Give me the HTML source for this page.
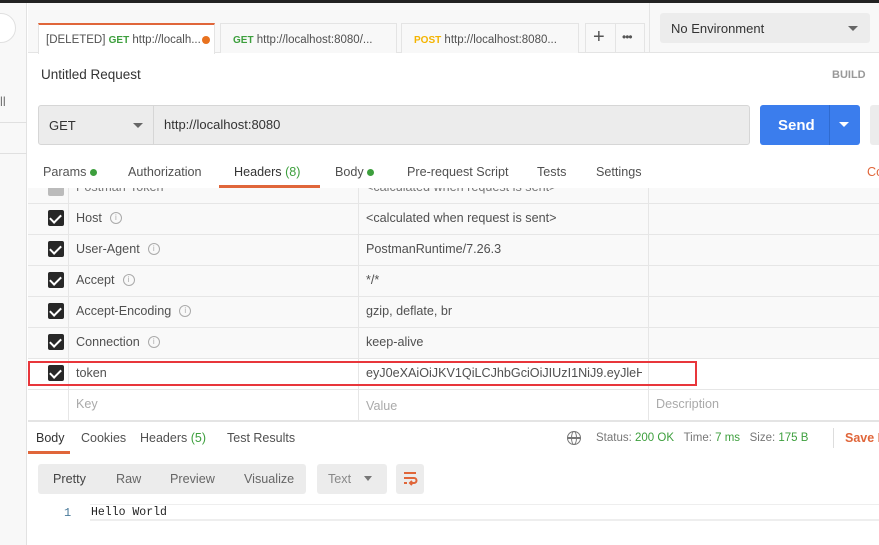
<!DOCTYPE html>
<html><head><meta charset="utf-8"><style>
*{box-sizing:border-box;margin:0;padding:0}
body{width:879px;height:545px;overflow:hidden;background:#fff;font-family:"Liberation Sans",sans-serif;font-size:12.6px;color:#505050;position:relative}
.a{position:absolute}
.t{white-space:nowrap}
.cb{position:absolute;left:48px;width:16px;height:16px;background:#282828;border-radius:2px}
.cb:after{content:"";position:absolute;left:4px;top:2px;width:5px;height:9px;border:solid #fff;border-width:0 2px 2px 0;transform:rotate(45deg)}
.info{display:inline-block;width:12px;height:12px;border:1px solid #aaa;border-radius:50%;font-size:8px;color:#aaa;text-align:center;line-height:10px;margin-left:8px;vertical-align:top;margin-top:1px}
.g{color:#3d9f3d}
</style></head><body>
<div class="a" style="left:0;top:0;width:879px;height:3px;background:#222"></div>
<div class="a" style="left:0;top:3px;width:27px;height:542px;background:#f8f8f8;border-right:1px solid #e2e2e2"></div>
<div class="a" style="left:-20px;top:13px;width:36px;height:30px;border-radius:15px;background:#fff;border:1px solid #e0e0e0"></div>
<div class="a t" style="left:0;top:94px;font-size:13px;color:#777">ll</div>
<div class="a" style="left:0;top:122px;width:27px;height:1px;background:#e0e0e0"></div>
<div class="a" style="left:0;top:153px;width:27px;height:1px;background:#e0e0e0"></div>
<div class="a" style="left:28px;top:3px;width:851px;height:50px;background:#f8f8f8;border-bottom:1px solid #e4e4e4"></div>
<div class="a" style="left:38px;top:23px;width:177px;height:31px;background:#fff;border-top:2px solid #e0663a;border-left:1px solid #e4e4e4;border-right:1px solid #e4e4e4"></div>
<div class="a t" style="left:46px;top:34px;font-size:11.5px;color:#505050">[DELETED] <b class="g" style="font-size:10px">GET</b> http://localh...</div>
<div class="a" style="left:202px;top:36px;width:8px;height:8px;border-radius:50%;background:#e8721f"></div>
<div class="a" style="left:220px;top:23px;width:177px;height:30px;background:#f8f8f8;border:1px solid #e4e4e4;border-bottom:0"></div>
<div class="a t" style="left:233px;top:34px;font-size:11.5px"><b class="g" style="font-size:10px">GET</b> http://localhost:8080/...</div>
<div class="a" style="left:401px;top:23px;width:178px;height:30px;background:#f8f8f8;border:1px solid #e4e4e4;border-bottom:0"></div>
<div class="a t" style="left:414px;top:34px;font-size:11.5px"><b style="font-size:10px;color:#f4b400">POST</b> http://localhost:8080...</div>
<div class="a" style="left:585px;top:23px;width:60px;height:30px;border:1px solid #e4e4e4;border-bottom:0"></div>
<div class="a" style="left:615px;top:23px;width:1px;height:30px;background:#e4e4e4"></div>
<div class="a t" style="left:593px;top:26px;font-size:20px;color:#555">+</div>
<div class="a t" style="left:622px;top:30px;font-size:12px;color:#555;letter-spacing:-1px">•••</div>
<div class="a" style="left:649px;top:3px;width:1px;height:50px;background:#e4e4e4"></div>
<div class="a" style="left:660px;top:13px;width:210px;height:30px;background:#ececec;border-radius:3px"></div>
<div class="a t" style="left:671px;top:21px;font-size:13px;color:#333">No Environment</div>
<div class="a" style="left:848px;top:26px;border:5px solid transparent;border-top:5px solid #666"></div>
<div class="a t" style="left:41px;top:67px;font-size:13.5px;color:#333">Untitled Request</div>
<div class="a t" style="left:832px;top:69px;font-size:11px;color:#999;font-weight:bold">BUILD</div>
<div class="a" style="left:38px;top:105px;width:712px;height:40px;background:#ececec;border:1px solid #d6d6d6;border-radius:3px"></div>
<div class="a" style="left:153px;top:106px;width:1px;height:38px;background:#d6d6d6"></div>
<div class="a t" style="left:49px;top:118px;font-size:13px;color:#333">GET</div>
<div class="a" style="left:133px;top:123px;border:5px solid transparent;border-top:5px solid #666"></div>
<div class="a t" style="left:164px;top:117px;font-size:13px;color:#333">http://localhost:8080</div>
<div class="a" style="left:760px;top:105px;width:100px;height:40px;background:#3b7ded;border-radius:3px"></div>
<div class="a" style="left:829px;top:105px;width:1px;height:40px;background:#2f6bd0"></div>
<div class="a t" style="left:778px;top:117px;font-size:15px;color:#fff;font-weight:bold">Send</div>
<div class="a" style="left:839px;top:122px;border:5px solid transparent;border-top:5px solid #fff"></div>
<div class="a" style="left:870px;top:105px;width:12px;height:40px;background:#ececec;border-radius:3px"></div>
<div class="a t" style="left:43px;top:165px;color:#555">Params <span style="display:inline-block;width:7px;height:7px;border-radius:50%;background:#3d9f3d"></span></div>
<div class="a t" style="left:128px;top:165px">Authorization</div>
<div class="a t" style="left:234px;top:165px;color:#333">Headers <span class="g">(8)</span></div>
<div class="a" style="left:219px;top:185px;width:101px;height:3px;background:#e0663a"></div>
<div class="a t" style="left:335px;top:165px">Body <span style="display:inline-block;width:7px;height:7px;border-radius:50%;background:#3d9f3d"></span></div>
<div class="a t" style="left:407px;top:165px">Pre-request Script</div>
<div class="a t" style="left:537px;top:165px">Tests</div>
<div class="a t" style="left:596px;top:165px">Settings</div>
<div class="a t" style="left:867px;top:165px;color:#e0663a">Co</div>
<div class="a" style="left:28px;top:188px;width:851px;height:170px;background:#f9f9f9"></div>
<div class="a" style="left:68px;top:188px;width:1px;height:232px;background:#e6e6e6"></div>
<div class="a" style="left:358px;top:188px;width:1px;height:232px;background:#e6e6e6"></div>
<div class="a" style="left:648px;top:188px;width:1px;height:232px;background:#e6e6e6"></div>
<div class="a" style="left:28px;top:203px;width:851px;height:1px;background:#e6e6e6"></div>
<div class="a" style="left:28px;top:234px;width:851px;height:1px;background:#e6e6e6"></div>
<div class="a" style="left:28px;top:265px;width:851px;height:1px;background:#e6e6e6"></div>
<div class="a" style="left:28px;top:296px;width:851px;height:1px;background:#e6e6e6"></div>
<div class="a" style="left:28px;top:327px;width:851px;height:1px;background:#e6e6e6"></div>
<div class="a" style="left:28px;top:358px;width:851px;height:1px;background:#e6e6e6"></div>
<div class="a" style="left:28px;top:389px;width:851px;height:1px;background:#e6e6e6"></div>
<div class="a" style="left:28px;top:188px;width:851px;height:8px;overflow:hidden">
  <div class="a t" style="left:48px;top:-8px;color:#777">Postman-Token</div>
  <div class="a t" style="left:338px;top:-8px;color:#777">&lt;calculated when request is sent&gt;</div>
</div>
<div class="a" style="left:48px;top:188px;width:16px;height:8px;background:#bbb;border-radius:0 0 2px 2px"></div>
<div class="cb" style="top:210px"></div><div class="a t" style="left:76px;top:211px">Host<span class="info">i</span></div><div class="a t" style="left:366px;top:211px">&lt;calculated when request is sent&gt;</div>
<div class="cb" style="top:241px"></div><div class="a t" style="left:76px;top:242px">User-Agent<span class="info">i</span></div><div class="a t" style="left:366px;top:242px">PostmanRuntime/7.26.3</div>
<div class="cb" style="top:272px"></div><div class="a t" style="left:76px;top:273px">Accept<span class="info">i</span></div><div class="a t" style="left:366px;top:273px">*/*</div>
<div class="cb" style="top:303px"></div><div class="a t" style="left:76px;top:304px">Accept-Encoding<span class="info">i</span></div><div class="a t" style="left:366px;top:304px">gzip, deflate, br</div>
<div class="cb" style="top:334px"></div><div class="a t" style="left:76px;top:335px">Connection<span class="info">i</span></div><div class="a t" style="left:366px;top:335px">keep-alive</div>
<div class="cb" style="top:365px"></div><div class="a t" style="left:76px;top:366px">token</div>
<div class="a t" style="left:366px;top:366px;width:276px;overflow:hidden">eyJ0eXAiOiJKV1QiLCJhbGciOiJIUzI1NiJ9.eyJleHAiOjE</div>
<div class="a" style="left:28px;top:361px;width:669px;height:25px;border:2px solid #e8363b"></div>
<div class="a t" style="left:76px;top:397px;color:#aaa">Key</div>
<div class="a t" style="left:366px;top:399px;color:#aaa">Value</div>
<div class="a t" style="left:656px;top:397px;color:#aaa">Description</div>
<div class="a" style="left:28px;top:420px;width:851px;height:2px;background:#e4e4e4"></div>
<div class="a t" style="left:36px;top:431px;font-size:12.5px;color:#333">Body</div>
<div class="a" style="left:28px;top:451px;width:42px;height:3px;background:#e0663a"></div>
<div class="a t" style="left:81px;top:431px;font-size:12.5px">Cookies</div>
<div class="a t" style="left:140px;top:431px;font-size:12.5px">Headers <span class="g">(5)</span></div>
<div class="a t" style="left:227px;top:431px;font-size:12.5px">Test Results</div>
<div class="a" style="left:567px;top:431px;width:14px;height:14px;border:1.5px solid #777;border-radius:50%"></div>
<div class="a" style="left:571px;top:431px;width:6px;height:14px;border:1.5px solid #777;border-radius:50%"></div>
<div class="a" style="left:567px;top:437px;width:14px;height:1.5px;background:#777"></div>
<div class="a t" style="left:596px;top:432px;font-size:11.5px;color:#777">Status: <span class="g">200 OK</span>&nbsp;&nbsp;&nbsp;Time: <span class="g">7 ms</span>&nbsp;&nbsp;&nbsp;Size: <span class="g">175 B</span></div>
<div class="a" style="left:833px;top:428px;width:1px;height:20px;background:#ddd"></div>
<div class="a t" style="left:845px;top:431px;font-size:12.5px;color:#e0663a;font-weight:bold">Save R</div>
<div class="a" style="left:38px;top:464px;width:268px;height:30px;background:#ececec;border-radius:3px"></div>
<div class="a t" style="left:53px;top:472px;color:#444">Pretty</div>
<div class="a t" style="left:116px;top:472px;color:#666">Raw</div>
<div class="a t" style="left:170px;top:472px;color:#666">Preview</div>
<div class="a t" style="left:244px;top:472px;color:#666">Visualize</div>
<div class="a" style="left:317px;top:464px;width:70px;height:30px;background:#ececec;border-radius:3px"></div>
<div class="a t" style="left:328px;top:472px;color:#888">Text</div>
<div class="a" style="left:364px;top:476px;border:4px solid transparent;border-top:5px solid #777"></div>
<div class="a" style="left:396px;top:464px;width:28px;height:30px;background:#ececec;border-radius:3px"></div>
<svg class="a" style="left:401px;top:469px" width="18" height="20" viewBox="0 0 18 20"><path d="M3 4h12M3 9h10a2.5 2.5 0 0 1 0 5H9M11 12l-2 2 2 2M3 14h3" stroke="#e0663a" stroke-width="2" fill="none"/></svg>
<div class="a t" style="left:64px;top:506px;font-family:'Liberation Mono',monospace;font-size:12px;color:#4a7a9a">1</div>
<div class="a" style="left:90px;top:504px;width:789px;height:17px;border-top:1px solid #eee;border-bottom:2px solid #eee"></div>
<div class="a t" style="left:91px;top:506px;font-family:'Liberation Mono',monospace;font-size:11.5px;color:#222">Hello World</div>
</body></html>
